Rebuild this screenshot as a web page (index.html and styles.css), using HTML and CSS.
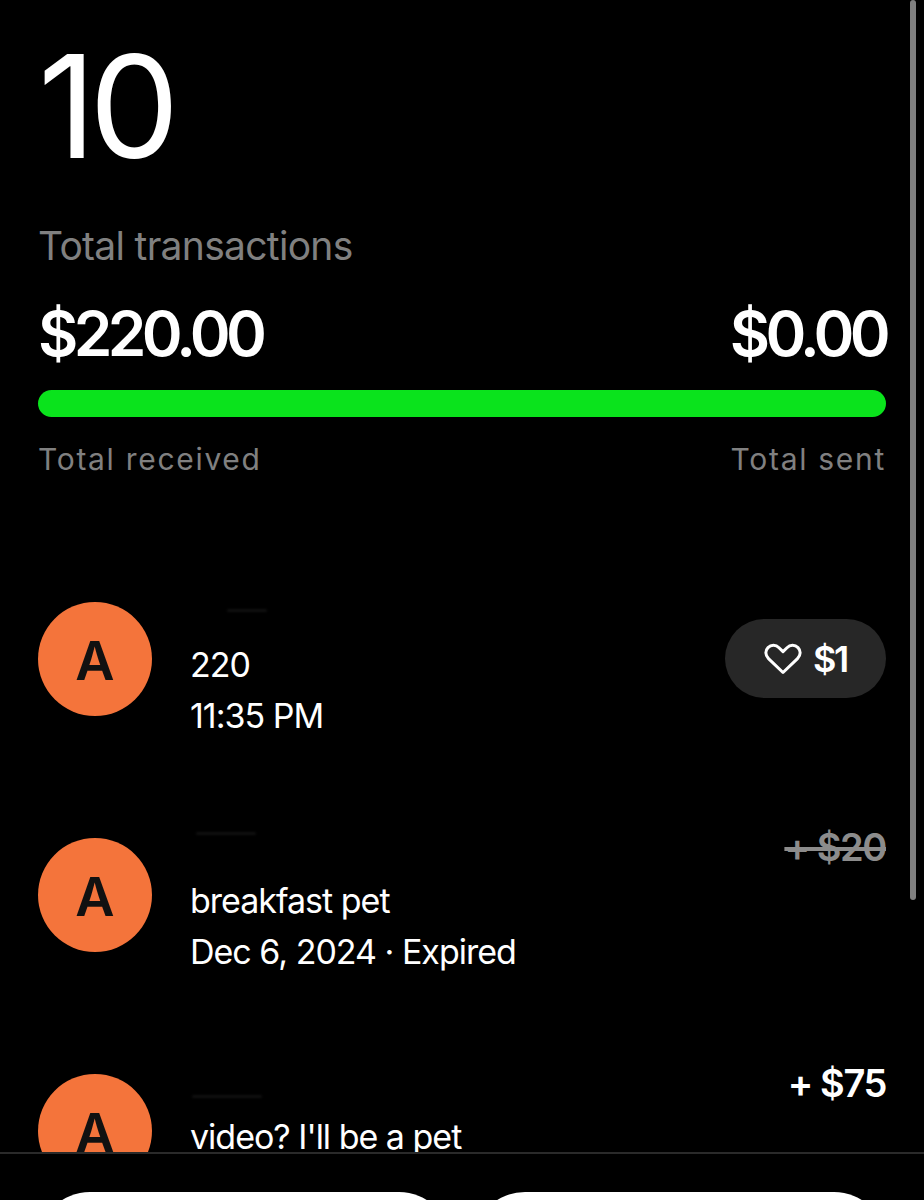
FILE: index.html
```html
<!DOCTYPE html>
<html lang="en">
<head>
    <meta charset="UTF-8">
    <meta name="viewport" content="width=device-width, initial-scale=1.0">
    <title>Transactions</title>
    <link rel="stylesheet" href="styles.css">
</head>
<body>
    <div class="screen">
        <div class="content">
            <div class="summary">
                <div class="count">10</div>
                <div class="count-label">Total transactions</div>
                <div class="totals">
                    <span>$220.00</span>
                    <span>$0.00</span>
                </div>
                <div class="bar"></div>
                <div class="bar-labels">
                    <span>Total received</span>
                    <span>Total sent</span>
                </div>
            </div>

            <div class="activity">
                <div class="row">
                    <div class="avatar">A</div>
                    <div class="info">
                        <div class="name"><span class="smudge smudge-1"></span></div>
                        <div>220</div>
                        <div>11:35 PM</div>
                    </div>
                    <div class="tip">
                        <svg class="heart" viewBox="0 0 38 32" width="38" height="32">
                            <path d="M19 29.5 4.5 15.6C.9 12 1.2 7.4 4 4.6c3-3 7.9-3 11 .1L19 8.6l4-3.9c3.1-3.1 8-3.1 11-.1 2.8 2.8 3.1 7.4-.5 11z" fill="none" stroke="#fff" stroke-width="3" stroke-linejoin="round"/>
                        </svg>
                        <span>$1</span>
                    </div>
                </div>
                <div class="row">
                    <div class="avatar">A</div>
                    <div class="info">
                        <div class="name"><span class="smudge smudge-2"></span></div>
                        <div>breakfast pet</div>
                        <div>Dec 6, 2024 · Expired</div>
                    </div>
                    <div class="amount expired">+ $20</div>
                </div>
                <div class="row">
                    <div class="avatar">A</div>
                    <div class="info">
                        <div class="name"><span class="smudge smudge-3"></span></div>
                        <div>video? I'll be a pet</div>
                    </div>
                    <div class="amount">+ $75</div>
                </div>
            </div>
        </div>

        <div class="scrollbar"></div>

        <div class="footer">
            <div class="footer-btn"></div>
            <div class="footer-btn"></div>
        </div>
    </div>
</body>
</html>
```

FILE: styles.css
```css
html, body {
    margin: 0;
    padding: 0;
    background: #000;
}
.screen {
    position: relative;
    display: flex;
    flex-direction: column;
    width: 924px;
    height: 1200px;
    overflow: hidden;
    background: #000;
    color: #fff;
    font-family: Inter, "Liberation Sans", sans-serif;
}
.content {
    height: 1152px;
    overflow: hidden;
    padding: 0 38px;
    box-sizing: border-box;
}
.summary {
    padding-top: 28px;
}
.count {
    font-size: 143px;
    line-height: 156px;
    letter-spacing: -7px;
}
.count-label {
    margin-top: 38px;
    font-size: 39px;
    line-height: 48px;
    letter-spacing: -0.7px;
    color: #808080;
}
.totals {
    display: flex;
    justify-content: space-between;
    margin-top: 29px;
    font-size: 62px;
    font-weight: 600;
    line-height: 70px;
    letter-spacing: -4.6px;
}
.bar {
    height: 27px;
    margin-top: 21px;
    border-radius: 14px;
    background: #0ae31c;
}
.bar-labels {
    display: flex;
    justify-content: space-between;
    margin-top: 24px;
    font-size: 30px;
    line-height: 36px;
    letter-spacing: 1.7px;
    color: #808080;
}
.activity {
    margin-top: 111px;
}
.row {
    display: flex;
    align-items: flex-start;
    height: 236px;
}
.avatar {
    flex: none;
    width: 114px;
    height: 114px;
    margin-top: 14px;
    margin-right: 38px;
    border-radius: 50%;
    background: #f4743b;
    color: #111;
    font-size: 54px;
    font-weight: 600;
    line-height: 118px;
    text-align: center;
}
.info {
    flex: 1;
    font-size: 34px;
    line-height: 51px;
    letter-spacing: -1px;
}
.name {
    height: 51px;
}
.smudge {
    display: block;
    height: 3px;
    background: #101010;
    border-radius: 2px;
    filter: blur(1px);
}
.smudge-1 {
    width: 40px;
    transform: translate(37px, 21px);
}
.smudge-2 {
    width: 60px;
    transform: translate(6px, 8px);
}
.smudge-3 {
    width: 70px;
    transform: translate(2px, 35px);
}
.tip {
    display: flex;
    align-items: center;
    justify-content: center;
    gap: 11px;
    width: 161px;
    height: 79px;
    margin-top: 31px;
    border-radius: 40px;
    background: #272727;
    font-size: 36px;
    font-weight: 600;
    letter-spacing: -2.4px;
}
.amount {
    font-size: 38px;
    font-weight: 600;
    line-height: 46px;
    letter-spacing: -1.4px;
}
.expired {
    color: #8c8c8c;
    text-decoration: line-through;
    text-decoration-thickness: 4px;
}
.scrollbar {
    position: absolute;
    top: 0;
    left: 910px;
    width: 6px;
    height: 900px;
    border-radius: 3px;
    background: #808080;
}
.footer {
    display: flex;
    gap: 22px;
    height: 48px;
    padding: 38px 38px 0;
    box-sizing: border-box;
    border-top: 2px solid #2a2a2a;
}
.footer-btn {
    flex: 1;
    height: 110px;
    border-radius: 52px;
    background: #fff;
}
```
